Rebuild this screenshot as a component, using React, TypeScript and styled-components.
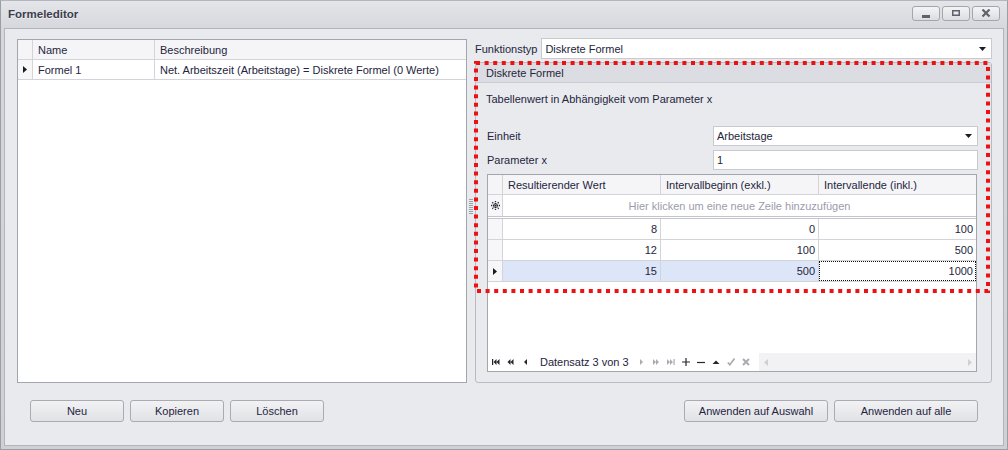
import React from "react";
import styled, { createGlobalStyle, css } from "styled-components";

const GlobalStyle = createGlobalStyle`
	html, body {
		margin: 0;
		padding: 0;
		background: #d3d4d9;
	}
	body {
		font-family: "Liberation Sans", Arial, sans-serif;
		font-size: 11px;
		color: #24253d;
	}
	* {
		box-sizing: border-box;
	}
`;

const TEXT = "#24253d";
const GRID_LINE = "#d3d4da";

interface IRow {
	value: string;
	from: string;
	to: string;
}

const rows: IRow[] = [
	{ value: "8", from: "0", to: "100" },
	{ value: "12", from: "100", to: "500" },
	{ value: "15", from: "500", to: "1000" },
];

const RowArrow = () => (
	<svg width="4" height="7" viewBox="0 0 4 7">
		<path d="M0 0 L4 3.5 L0 7 Z" fill="#1b1b22" />
	</svg>
);

const DropArrow = () => (
	<svg width="7" height="4" viewBox="0 0 7 4">
		<path d="M0 0 H7 L3.5 4 Z" fill="#1b1b22" />
	</svg>
);

const NewRowStar = () => (
	<svg width="9" height="9" viewBox="0 0 9 9">
		<g stroke="#2a2a33" strokeWidth="1.3" strokeDasharray="1.3 0.7">
			<line x1="4.5" y1="0" x2="4.5" y2="9" />
			<line x1="0" y1="4.5" x2="9" y2="4.5" />
			<line x1="1.3" y1="1.3" x2="7.7" y2="7.7" />
			<line x1="7.7" y1="1.3" x2="1.3" y2="7.7" />
		</g>
	</svg>
);

type NavKind = "first" | "prevPage" | "prev" | "next" | "nextPage" | "last" | "add" | "remove" | "up" | "ok" | "cancel";

const NavIcon = ({ kind, disabled }: { kind: NavKind; disabled?: boolean }) => {
	const c = disabled ? "#a9aab2" : "#25262e";
	let body: React.ReactNode = null;
	switch (kind) {
		case "first":
			body = <>
				<rect x="0" y="1" width="1.2" height="6" fill={c} />
				<path d="M1.5 4 L4.5 1 V7 Z M4.5 4 L7.5 1 V7 Z" fill={c} />
			</>;
			break;
		case "prevPage":
			body = <path d="M0.5 4 L3.5 1 V7 Z M3.5 4 L6.5 1 V7 Z" fill={c} />;
			break;
		case "prev":
			body = <path d="M2 4 L5 1 V7 Z" fill={c} />;
			break;
		case "next":
			body = <path d="M3 1 L6 4 L3 7 Z" fill={c} />;
			break;
		case "nextPage":
			body = <path d="M1 1 L4 4 L1 7 Z M4 1 L7 4 L4 7 Z" fill={c} />;
			break;
		case "last":
			body = <>
				<path d="M0 1 L3 4 L0 7 Z M3 1 L6 4 L3 7 Z" fill={c} />
				<rect x="6.5" y="1" width="1.2" height="6" fill={c} />
			</>;
			break;
		case "add":
			body = <path d="M0 4 H8 M4 0 V8" stroke={c} strokeWidth="1.2" />;
			break;
		case "remove":
			body = <path d="M0 4.5 H8" stroke={c} strokeWidth="1.2" />;
			break;
		case "up":
			body = <path d="M0.5 6 L4 2.5 L7.5 6 Z" fill={c} />;
			break;
		case "ok":
			body = <path d="M0.8 4.5 L2.8 6.8 L7.5 0.5" stroke={c} strokeWidth="1.6" fill="none" />;
			break;
		case "cancel":
			body = <path d="M1 1 L7 7 M7 1 L1 7" stroke={c} strokeWidth="1.9" />;
			break;
	}
	return (
		<NavButton>
			<svg width="8" height="8" viewBox="0 0 8 8">{body}</svg>
		</NavButton>
	);
};

const WindowIcon = ({ kind }: { kind: "min" | "max" | "close" }) => (
	<svg width="12" height="9" viewBox="0 0 12 9">
		{kind === "min" && <rect x="2" y="6" width="8" height="3" fill="#5f626d" />}
		{kind === "max" && <rect x="2.75" y="1.75" width="6.5" height="4.5" fill="none" stroke="#5f626d" strokeWidth="1.5" />}
		{kind === "close" && <path d="M2.5 0.5 L9.5 7.5 M9.5 0.5 L2.5 7.5" stroke="#5f626d" strokeWidth="2.2" />}
	</svg>
);

const SplitterGrip = () => (
	<svg width="4" height="15" viewBox="0 0 4 15">
		{[0, 2, 4, 6, 8, 10, 12, 14].map((y) => (
			<rect key={y} x="0" y={y} width="4" height="1" fill="#9c9ea8" />
		))}
	</svg>
);

const HighlightFrame = () => (
	<SHighlight width="516" height="232" viewBox="0 0 516 232">
		<rect x="2" y="2" width="512" height="228" fill="none" stroke="#ee1111" strokeWidth="4" strokeDasharray="4 4.6" />
	</SHighlight>
);

export default function App() {
	return (
		<>
			<GlobalStyle />
			<SWindow>
				<STitleBar>
					<STitle>Formeleditor</STitle>
					<SWindowButtons>
						<SWindowButton><WindowIcon kind="min" /></SWindowButton>
						<SWindowButton><WindowIcon kind="max" /></SWindowButton>
						<SWindowButton><WindowIcon kind="close" /></SWindowButton>
					</SWindowButtons>
				</STitleBar>
				<SBody>
					<SMain>
						<SFormulaGrid>
							<SFormulaHeader>
								<SIndicatorCell $header />
								<SHeaderCell>Name</SHeaderCell>
								<SHeaderCell $last>Beschreibung</SHeaderCell>
							</SFormulaHeader>
							<SFormulaRow>
								<SIndicatorCell><RowArrow /></SIndicatorCell>
								<STextCell>Formel 1</STextCell>
								<STextCell $last>Net. Arbeitszeit (Arbeitstage) = Diskrete Formel (0 Werte)</STextCell>
							</SFormulaRow>
						</SFormulaGrid>

						<SSplitter><SplitterGrip /></SSplitter>

						<SRightPane>
							<STypeRow>
								<SLabel>Funktionstyp</SLabel>
								<SCombo $grow>
									<span>Diskrete Formel</span>
									<DropArrow />
								</SCombo>
							</STypeRow>

							<SGroup>
								<SGroupHeader>Diskrete Formel</SGroupHeader>
								<SGroupContent>
									<SDescription>Tabellenwert in Abhängigkeit vom Parameter x</SDescription>
									<SFields>
										<SFieldRow>
											<SLabel>Einheit</SLabel>
											<SCombo>
												<span>Arbeitstage</span>
												<DropArrow />
											</SCombo>
										</SFieldRow>
										<SFieldRow>
											<SLabel>Parameter x</SLabel>
											<SCombo>
												<span>1</span>
											</SCombo>
										</SFieldRow>
									</SFields>

									<SValueGrid>
										<SValueHeader>
											<SIndicatorCell $header />
											<SHeaderCell>Resultierender Wert</SHeaderCell>
											<SHeaderCell>Intervallbeginn (exkl.)</SHeaderCell>
											<SHeaderCell $last>Intervallende (inkl.)</SHeaderCell>
										</SValueHeader>
										<SNewRow>
											<SIndicatorCell><NewRowStar /></SIndicatorCell>
											<SNewRowText>Hier klicken um eine neue Zeile hinzuzufügen</SNewRowText>
										</SNewRow>
										{rows.map((row, idx) => {
											const isSelected = idx === rows.length - 1;
											return (
												<SValueRow key={idx}>
													<SIndicatorCell>{isSelected && <RowArrow />}</SIndicatorCell>
													<SNumberCell $selected={isSelected}>{row.value}</SNumberCell>
													<SNumberCell $selected={isSelected}>{row.from}</SNumberCell>
													<SNumberCell $focused={isSelected} $last>{row.to}</SNumberCell>
												</SValueRow>
											);
										})}
										<SGridSpace />
										<SNavigator>
											<NavIcon kind="first" />
											<NavIcon kind="prevPage" />
											<NavIcon kind="prev" />
											<SNavText>Datensatz 3 von 3</SNavText>
											<NavIcon kind="next" disabled />
											<NavIcon kind="nextPage" disabled />
											<NavIcon kind="last" disabled />
											<NavIcon kind="add" />
											<NavIcon kind="remove" />
											<NavIcon kind="up" />
											<NavIcon kind="ok" disabled />
											<NavIcon kind="cancel" disabled />
											<SScrollBar>
												<svg width="4" height="7" viewBox="0 0 4 7"><path d="M4 0 L0 3.5 L4 7 Z" fill="#cfd0d6" /></svg>
												<svg width="4" height="7" viewBox="0 0 4 7"><path d="M0 0 L4 3.5 L0 7 Z" fill="#cfd0d6" /></svg>
											</SScrollBar>
										</SNavigator>
									</SValueGrid>
								</SGroupContent>
								<HighlightFrame />
							</SGroup>
						</SRightPane>
					</SMain>

					<SButtonBar>
						<SButtonGroup>
							<SButton>Neu</SButton>
							<SButton>Kopieren</SButton>
							<SButton>Löschen</SButton>
						</SButtonGroup>
						<SButtonGroup>
							<SButton $wide>Anwenden auf Auswahl</SButton>
							<SButton $wide>Anwenden auf alle</SButton>
						</SButtonGroup>
					</SButtonBar>
				</SBody>
			</SWindow>
		</>
	);
}

const SWindow = styled.div`
	width: 1008px;
	height: 450px;
	display: flex;
	flex-direction: column;
	background: linear-gradient(#e4e5e9, #d6d7dc 28px, #cfd0d5);
	border: 1px solid #9c9ea6;
	border-top-color: #b4b6bd;
	padding: 0 3px 3px 3px;
`;

const STitleBar = styled.div`
	height: 27px;
	display: flex;
	align-items: flex-start;
	justify-content: space-between;
	padding: 0 4px 0 4px;
`;

const STitle = styled.div`
	font-weight: bold;
	font-size: 11.5px;
	line-height: 13px;
	margin-top: 7px;
	color: #3a3e4e;
	text-shadow: 0 1px 0 rgba(255, 255, 255, 0.6);
`;

const SWindowButtons = styled.div`
	display: flex;
	gap: 2px;
	margin-top: 5px;
`;

const SWindowButton = styled.div`
	width: 28px;
	height: 15px;
	border: 1px solid #a4a6ae;
	border-radius: 3px;
	background: linear-gradient(#f4f4f6, #dcdde1);
	display: flex;
	align-items: center;
	justify-content: center;
`;

const SBody = styled.div`
	flex: 1;
	display: flex;
	flex-direction: column;
	background: #e9eaee;
	border: 1px solid #b3b5bd;
	padding: 9px 11px 0 12px;
`;

const SMain = styled.div`
	display: flex;
	height: 345px;
`;

const gridBox = css`
	background: #fff;
	border: 1px solid #a4a6ae;
	display: flex;
	flex-direction: column;
`;

const SFormulaGrid = styled.div`
	${gridBox};
	width: 450px;
	margin-top: 1px;
`;

const SFormulaHeader = styled.div`
	display: grid;
	grid-template-columns: 15px 122px 1fr;
	height: 20px;
	background: #f5f5f7;
	border-bottom: 1px solid ${GRID_LINE};
`;

const SFormulaRow = styled.div`
	display: grid;
	grid-template-columns: 15px 122px 1fr;
	height: 20px;
	border-bottom: 1px solid ${GRID_LINE};
`;

const SIndicatorCell = styled.div<{ $header?: boolean }>`
	display: flex;
	align-items: center;
	justify-content: center;
	background: ${({ $header }) => ($header ? "#f5f5f7" : "#f7f7f9")};
	border-right: 1px solid ${GRID_LINE};
`;

const SHeaderCell = styled.div<{ $last?: boolean }>`
	display: flex;
	align-items: center;
	padding-left: 5px;
	color: ${TEXT};
	white-space: nowrap;
	overflow: hidden;
	border-right: ${({ $last }) => ($last ? "none" : `1px solid ${GRID_LINE}`)};
`;

const STextCell = styled.div<{ $last?: boolean }>`
	display: flex;
	align-items: center;
	padding-left: 5px;
	color: ${TEXT};
	white-space: nowrap;
	overflow: hidden;
	border-right: ${({ $last }) => ($last ? "none" : `1px solid ${GRID_LINE}`)};
`;

const SSplitter = styled.div`
	width: 8px;
	display: flex;
	align-items: center;
	justify-content: center;
	padding-bottom: 8px;
`;

const SRightPane = styled.div`
	flex: 1;
	display: flex;
	flex-direction: column;
	gap: 3px;
`;

const STypeRow = styled.div`
	display: flex;
	align-items: center;
	height: 21px;
	gap: 4px;
`;

const SLabel = styled.div`
	color: ${TEXT};
	white-space: nowrap;
`;

const SCombo = styled.div<{ $grow?: boolean }>`
	height: ${({ $grow }) => ($grow ? "21px" : "20px")};
	${({ $grow }) => ($grow ? "flex: 1;" : "width: 265px;")}
	background: #fff;
	border: 1px solid #c9cad0;
	display: flex;
	align-items: center;
	justify-content: space-between;
	padding: 0 5px 0 3px;
	color: ${TEXT};
`;

const SGroup = styled.div`
	position: relative;
	flex: 1;
	display: flex;
	flex-direction: column;
	border: 1px solid #b9bbc2;
	border-radius: 3px;
	background: #e9eaee;
`;

const SGroupHeader = styled.div`
	height: 20px;
	display: flex;
	align-items: center;
	padding-left: 10px;
	background: #dcdde2;
	border-bottom: 1px solid #cbccd2;
	color: ${TEXT};
`;

const SGroupContent = styled.div`
	flex: 1;
	display: flex;
	flex-direction: column;
	padding: 10px 13px 10px 10px;
`;

const SDescription = styled.div`
	height: 13px;
	line-height: 13px;
	color: ${TEXT};
`;

const SFields = styled.div`
	display: flex;
	flex-direction: column;
	gap: 4px;
	margin-top: 20px;
`;

const SFieldRow = styled.div`
	display: flex;
	align-items: center;
	justify-content: space-between;
	padding-left: 1px;
`;

const SValueGrid = styled.div`
	${gridBox};
	flex: 1;
	margin: 4px 1px 0 1px;
`;

const valueColumns = css`
	display: grid;
	grid-template-columns: 15px 158px 158px 1fr;
`;

const SValueHeader = styled.div`
	${valueColumns};
	height: 20px;
	background: #f5f5f7;
	border-bottom: 1px solid ${GRID_LINE};
`;

const SNewRow = styled.div`
	${valueColumns};
	height: 24px;
	border-bottom: 3px double #c4c5cc;
`;

const SNewRowText = styled.div`
	grid-column: 2 / 5;
	display: flex;
	align-items: center;
	justify-content: center;
	color: #9b9cab;
`;

const SValueRow = styled.div`
	${valueColumns};
	height: 21px;
	border-bottom: 1px solid ${GRID_LINE};
`;

const SNumberCell = styled.div<{ $selected?: boolean; $focused?: boolean; $last?: boolean }>`
	display: flex;
	align-items: center;
	justify-content: flex-end;
	padding-right: 3px;
	color: ${TEXT};
	background: ${({ $selected }) => ($selected ? "#dde6f8" : "#fff")};
	border-right: ${({ $last }) => ($last ? "none" : `1px solid ${GRID_LINE}`)};
	${({ $focused }) => $focused && css`
		outline: 1px dotted #111;
		outline-offset: -1px;
	`}
`;

const SGridSpace = styled.div`
	flex: 1;
`;

const SNavigator = styled.div`
	height: 18px;
	display: flex;
	align-items: center;
`;

const NavButton = styled.div`
	width: 15px;
	height: 18px;
	flex-shrink: 0;
	display: flex;
	align-items: center;
	justify-content: center;
`;

const SNavText = styled.div`
	padding: 0 5px 0 7px;
	font-size: 11px;
	color: ${TEXT};
	white-space: nowrap;
`;

const SScrollBar = styled.div`
	flex: 1;
	align-self: stretch;
	margin-left: 5px;
	background: #f2f2f4;
	display: flex;
	align-items: center;
	justify-content: space-between;
	padding: 0 4px 0 5px;
`;

const SHighlight = styled.svg`
	position: absolute;
	left: -2px;
	top: -2px;
	pointer-events: none;
`;

const SButtonBar = styled.div`
	display: flex;
	justify-content: space-between;
	padding: 17px 14px 0 13px;
`;

const SButtonGroup = styled.div`
	display: flex;
	gap: 6px;
`;

const SButton = styled.div<{ $wide?: boolean }>`
	width: ${({ $wide }) => ($wide ? "144px" : "94px")};
	height: 22px;
	display: flex;
	align-items: center;
	justify-content: center;
	border: 1px solid #a9abb3;
	border-radius: 3px;
	background: linear-gradient(#f2f2f4, #e1e2e6);
	color: ${TEXT};
`;
